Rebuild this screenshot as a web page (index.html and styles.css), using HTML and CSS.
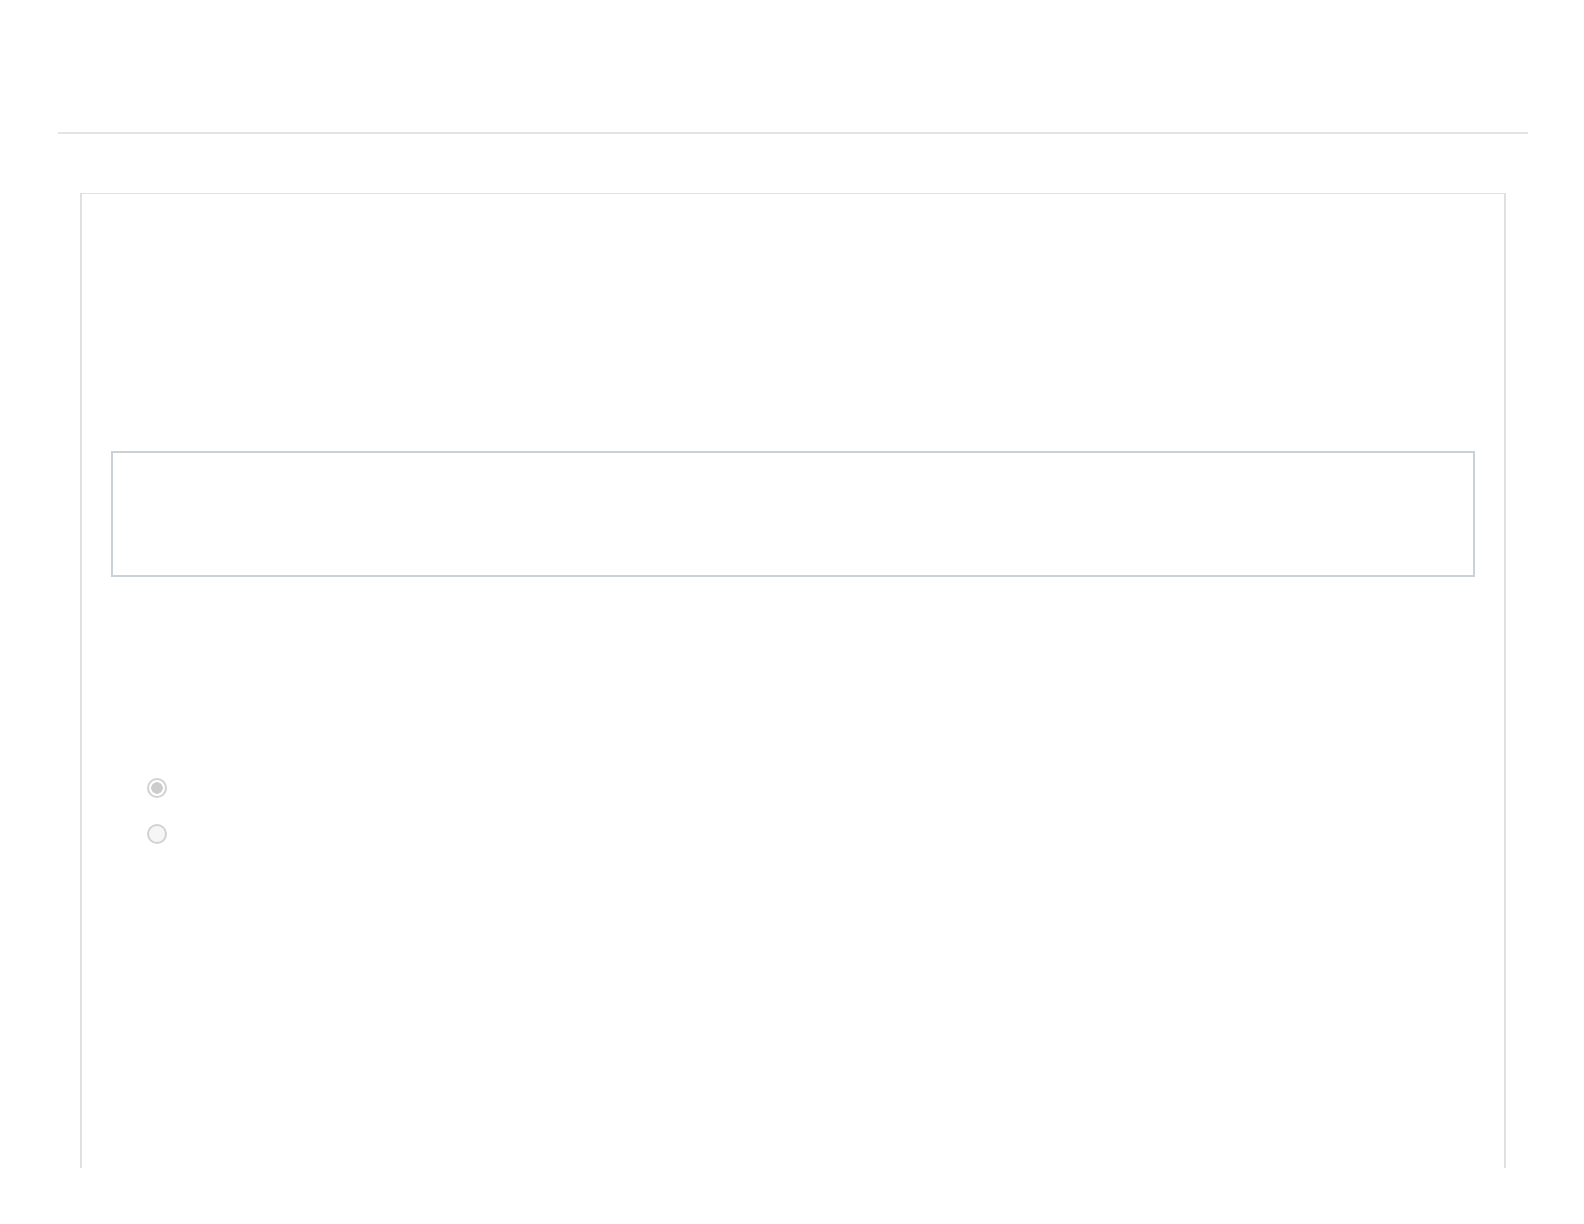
FILE: index.html
```html
<!DOCTYPE html>
<html lang="en">
<head>
<meta charset="utf-8">
<title>Form</title>
<link rel="stylesheet" href="styles.css">
</head>
<body>
<div class="page">
  <div class="rule"></div>
  <div class="card">
    <div class="field-box"></div>
    <div class="options">
      <label class="option"><input type="radio" name="opt" class="radio" checked disabled></label>
      <label class="option"><input type="radio" name="opt" class="radio" disabled></label>
    </div>
  </div>
</div>
</body>
</html>
```
FILE: styles.css
```css
html, body {
  margin: 0;
  padding: 0;
  background: #ffffff;
  font-family: "Liberation Sans", Arial, sans-serif;
}

.page {
  padding: 132px 56px 0 58px;
  height: 1224px;
  box-sizing: border-box;
  overflow: hidden;
}

.rule {
  height: 2px;
  background: #e6e3e3;
}

.card {
  margin: 59px 22px 0 22px;
  height: 975px;
  box-sizing: border-box;
  border-top: 1px solid #e2e2e2;
  border-left: 2px solid #e0e0e0;
  border-right: 2px solid #e0e0e0;
  padding: 257px 29px 0 29px;
}

.field-box {
  height: 126px;
  box-sizing: border-box;
  border: 2px solid #cbd1d9;
  background: #ffffff;
}

.options {
  display: flex;
  flex-direction: column;
  gap: 26px;
  margin-top: 201px;
  padding-left: 36px;
}

.option {
  display: flex;
  align-items: center;
  height: 20px;
}

.radio {
  appearance: none;
  -webkit-appearance: none;
  margin: 0;
  width: 20px;
  height: 20px;
  box-sizing: border-box;
  border-radius: 50%;
  border: 2px solid #d2d2d2;
  background: #f6f6f6;
}

.radio:checked {
  background: radial-gradient(circle, #cdcdcd 0 5.5px, #ffffff 6px);
}
```
